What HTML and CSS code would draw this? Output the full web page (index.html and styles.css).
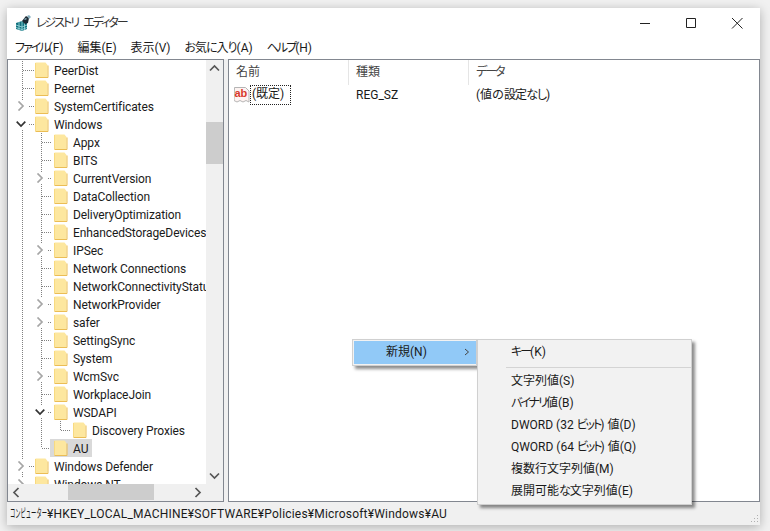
FILE: index.html
```html
<!DOCTYPE html>
<html lang="ja">
<head>
    <meta charset="UTF-8">
    <meta name="viewport" content="width=device-width, initial-scale=1.0">
    <title>レジストリ エディター</title>
    <link rel="stylesheet" href="styles.css">
</head>
<body>
    <svg class="defs" width="0" height="0">
        <defs>
            <symbol id="folder" viewBox="0 0 14 16">
                <path d="M.5 .5h10l2 2.500v12.500H.5z" fill="#fde79f"/>
                <path d="M13 3.500v12H.5" fill="none" stroke="#ebbd55"/>
                <path d="M.5 1v14" fill="none" stroke="#f8da80"/>
            </symbol>
            <symbol id="open" viewBox="0 0 10 10">
                <path d="M.7 2.700L5 7l4.300-4.300" fill="none" stroke="#333" stroke-width="1.700"/>
            </symbol>
            <symbol id="closed" viewBox="0 0 10 10">
                <path d="M2.500 .5L7 5 2.500 9.500" fill="none" stroke="#a6a6a6" stroke-width="1.700"/>
            </symbol>
        </defs>
    </svg>

    <div class="window">
        <div class="titlebar">
            <svg class="appicon" width="16" height="16" viewBox="0 0 16 16">
                <path d="M0 8l6-2 5 1.500V14l-5 2-6-2z" fill="#12707c"/>
                <path d="M0 10l6 2 5-2M0 12.500l6 2 5-2M3 7v8M6 6v10M8.500 7v8" stroke="#9fdde2" stroke-width=".8" fill="none"/>
                <path d="M6 6l4-5 3 2-1 5-3 1z" fill="#1d2a33"/>
                <path d="M11 1l2-1 2 2-2 2zM8 4l2-1 1 1-2 1z" fill="#86aebd"/>
            </svg>
            <span class="title kata">レジストリ エディター</span>
            <div class="winbtns">
                <svg width="46" height="30" viewBox="0 0 46 30"><path d="M18 15.500h10" stroke="#222"/></svg>
                <svg width="46" height="30" viewBox="0 0 46 30"><path d="M18.500 10.500h9v9h-9z" fill="none" stroke="#222"/></svg>
                <svg width="46" height="30" viewBox="0 0 46 30"><path d="M18 10l10.500 10.500M28.500 10L18 20.500" stroke="#222"/></svg>
            </div>
        </div>

        <div class="menubar">
            <span><span class="kata">ファイル</span>(F)</span>
            <span>編集(E)</span>
            <span>表示(V)</span>
            <span><span class="kana">お気に入り</span>(A)</span>
            <span><span class="kata">ヘルプ</span>(H)</span>
        </div>

        <div class="panes">
            <div class="treepane">
                <div class="treeview">
                    <div class="tree">
                        <svg class="guides" width="198" height="430" viewBox="0 0 198 430">
                            <path d="M14.500 0v39M14.500 69v330M14.500 411v6M15 9.500h11M15 27.500h11M21 45.500h5M21 63.500h5M21 405.500h5M21 423.500h5M33.500 72v39M33.500 123v60M33.500 195v42M33.500 267v42M33.500 321v24M33.500 357v30M34 81.500h10M34 99.500h10M34 135.500h10M34 153.500h10M34 171.500h10M34 207.500h10M34 225.500h10M34 279.500h10M34 297.500h10M34 333.500h10M34 387.500h10M40 117.500h4M40 189.500h4M40 243.500h4M40 261.500h4M40 315.500h4M40 351.500h4M52.500 360v9M53 369.500h10" stroke="#808080" stroke-dasharray="1 1" fill="none"/>
                        </svg>
                        <div class="row lv0"><svg class="tog"></svg><svg class="fld"><use href="#folder"/></svg><span>PeerDist</span></div>
                        <div class="row lv0"><svg class="tog"></svg><svg class="fld"><use href="#folder"/></svg><span>Peernet</span></div>
                        <div class="row lv0"><svg class="tog"><use href="#closed"/></svg><svg class="fld"><use href="#folder"/></svg><span>SystemCertificates</span></div>
                        <div class="row lv0"><svg class="tog"><use href="#open"/></svg><svg class="fld"><use href="#folder"/></svg><span>Windows</span></div>
                        <div class="row lv1"><svg class="tog"></svg><svg class="fld"><use href="#folder"/></svg><span>Appx</span></div>
                        <div class="row lv1"><svg class="tog"></svg><svg class="fld"><use href="#folder"/></svg><span>BITS</span></div>
                        <div class="row lv1"><svg class="tog"><use href="#closed"/></svg><svg class="fld"><use href="#folder"/></svg><span>CurrentVersion</span></div>
                        <div class="row lv1"><svg class="tog"></svg><svg class="fld"><use href="#folder"/></svg><span>DataCollection</span></div>
                        <div class="row lv1"><svg class="tog"></svg><svg class="fld"><use href="#folder"/></svg><span>DeliveryOptimization</span></div>
                        <div class="row lv1"><svg class="tog"></svg><svg class="fld"><use href="#folder"/></svg><span>EnhancedStorageDevices</span></div>
                        <div class="row lv1"><svg class="tog"><use href="#closed"/></svg><svg class="fld"><use href="#folder"/></svg><span>IPSec</span></div>
                        <div class="row lv1"><svg class="tog"></svg><svg class="fld"><use href="#folder"/></svg><span>Network Connections</span></div>
                        <div class="row lv1"><svg class="tog"></svg><svg class="fld"><use href="#folder"/></svg><span>NetworkConnectivityStatusIndicator</span></div>
                        <div class="row lv1"><svg class="tog"><use href="#closed"/></svg><svg class="fld"><use href="#folder"/></svg><span>NetworkProvider</span></div>
                        <div class="row lv1"><svg class="tog"><use href="#closed"/></svg><svg class="fld"><use href="#folder"/></svg><span>safer</span></div>
                        <div class="row lv1"><svg class="tog"></svg><svg class="fld"><use href="#folder"/></svg><span>SettingSync</span></div>
                        <div class="row lv1"><svg class="tog"></svg><svg class="fld"><use href="#folder"/></svg><span>System</span></div>
                        <div class="row lv1"><svg class="tog"><use href="#closed"/></svg><svg class="fld"><use href="#folder"/></svg><span>WcmSvc</span></div>
                        <div class="row lv1"><svg class="tog"></svg><svg class="fld"><use href="#folder"/></svg><span>WorkplaceJoin</span></div>
                        <div class="row lv1"><svg class="tog"><use href="#open"/></svg><svg class="fld"><use href="#folder"/></svg><span>WSDAPI</span></div>
                        <div class="row lv2"><svg class="tog"></svg><svg class="fld"><use href="#folder"/></svg><span>Discovery Proxies</span></div>
                        <div class="row lv1 selected"><svg class="tog"></svg><svg class="fld"><use href="#folder"/></svg><span>AU</span></div>
                        <div class="row lv0"><svg class="tog"><use href="#closed"/></svg><svg class="fld"><use href="#folder"/></svg><span>Windows Defender</span></div>
                        <div class="row lv0"><svg class="tog"><use href="#closed"/></svg><svg class="fld"><use href="#folder"/></svg><span>Windows NT</span></div>
                    </div>
                    <div class="vscroll">
                        <svg width="17" height="17" viewBox="0 0 17 17"><path d="M4 10.500l4.500-4.500 4.500 4.500" fill="none" stroke="#555" stroke-width="1.700"/></svg>
                        <div class="vtrack"><div class="vthumb"></div></div>
                        <svg width="17" height="17" viewBox="0 0 17 17"><path d="M4 6.500l4.500 4.500 4.500-4.500" fill="none" stroke="#555" stroke-width="1.700"/></svg>
                    </div>
                </div>
                <div class="hscroll">
                    <svg width="17" height="17" viewBox="0 0 17 17"><path d="M10.500 4l-4.500 4.500 4.500 4.500" fill="none" stroke="#555" stroke-width="1.700"/></svg>
                    <div class="htrack"><div class="hthumb"></div></div>
                    <svg width="17" height="17" viewBox="0 0 17 17"><path d="M6.500 4l4.500 4.500-4.500 4.500" fill="none" stroke="#555" stroke-width="1.700"/></svg>
                    <div class="corner"></div>
                </div>
            </div>

            <div class="listpane">
                <div class="listhead">
                    <div class="col col1">名前</div>
                    <div class="col col2">種類</div>
                    <div class="col col3 kata">データ</div>
                </div>
                <div class="listrow">
                    <div class="col1 namecell">
                        <svg width="16" height="16" viewBox="0 0 16 16">
                            <path d="M.5 .5h11l3.500 3.500v11l-3-1.500-3 1.500-3-1.500-3 1.500-3-1.500z" fill="#fdf3f1" stroke="#b5b5b5"/>
                            <text x=".5" y="10" class="abtext">ab</text>
                        </svg>
                        <span class="focused">(既定)</span>
                    </div>
                    <div class="col2 cell">REG_SZ</div>
                    <div class="col3 cell">(値の<span class="kana">設定なし</span>)</div>
                </div>
            </div>
        </div>

        <div class="statusbar">
            <span class="narrow">コンピューター</span>
            <span class="path">¥HKEY_LOCAL_MACHINE¥SOFTWARE¥Policies¥Microsoft¥Windows¥AU</span>
            <svg class="grip" width="12" height="12" viewBox="0 0 12 12">
                <path d="M9 2h1v1H9zM6 5h1v1H6zM9 5h1v1H9zM3 8h1v1H3zM6 8h1v1H6zM9 8h1v1H9z" fill="#b0b0b0"/>
            </svg>
        </div>

        <div class="ctxmenu">
            <div class="ctxitem">
                <span>新規(N)</span>
                <svg width="8" height="8" viewBox="0 0 8 8"><path d="M2 1l3.500 3L2 7" fill="none" stroke="#444"/></svg>
            </div>
        </div>
        <div class="submenu">
            <div class="subitem"><span><span class="kata">キー</span>(K)</span></div>
            <div class="subsep"></div>
            <div class="subitem">文字列値(S)</div>
            <div class="subitem"><span><span class="kata">バイナリ</span>値(B)</span></div>
            <div class="subitem"><span>DWORD (32 <span class="kata">ビット</span>) 値(D)</span></div>
            <div class="subitem"><span>QWORD (64 <span class="kata">ビット</span>) 値(Q)</span></div>
            <div class="subitem">複数行文字列値(M)</div>
            <div class="subitem"><span>展開可能<span class="kana">な</span>文字列値(E)</span></div>
        </div>
    </div>
</body>
</html>
```

FILE: styles.css
```css
*{
    box-sizing: border-box;
}
html, body{
    height: 100%;
}
body{
    margin: 0;
    padding: 8px 10px 6px 7px;
    background-color: #f1f1f1;
    font-family: Roboto, "Noto Sans CJK JP", sans-serif;
    font-size: 12px;
    line-height: 16px;
    color: #1a1a1a;
    overflow: hidden;
}
.defs{
    position: absolute;
}
/* 가나는 폭이 좁게 보이도록 */
.kana{
    font-feature-settings: "palt";
    letter-spacing: -1px;
}
.kata{
    font-feature-settings: "palt";
    letter-spacing: -2px;
}
.window{
    position: relative;
    height: 517px;
    display: flex;
    flex-direction: column;
    background: #fff;
    box-shadow: 0 2px 10px rgba(0, 0, 0, 0.28);
}
.titlebar{
    height: 30px;
    display: flex;
    align-items: center;
    padding-left: 9px;
    flex: none;
}
.appicon{
    margin-right: 4px;
}
.title{
    font-size: 12px;
    color: #333;
    word-spacing: 4px;
}
.winbtns{
    margin-left: auto;
    display: flex;
}
.menubar{
    height: 21px;
    display: flex;
    align-items: center;
    gap: 14px;
    padding: 0 0 2px 8px;
    flex: none;
}
.panes{
    flex: 1;
    display: flex;
    gap: 4px;
    background: #f0f0f0;
    min-height: 0;
}
/* 왼쪽 트리 */
.treepane{
    width: 217px;
    display: flex;
    flex-direction: column;
    border: 1px solid #828790;
    background: #fff;
    flex: none;
}
.treeview{
    flex: 1;
    display: flex;
    min-height: 0;
}
.tree{
    position: relative;
    flex: 1;
    overflow: hidden;
    padding-top: 1px;
    letter-spacing: -0.1px;
}
.guides{
    position: absolute;
    left: 0;
    top: 1px;
}
.row{
    position: relative;
    height: 18px;
    display: flex;
    align-items: center;
    white-space: nowrap;
}
.row span{
    padding-top: 2px;
}
.lv0{
    padding-left: 8px;
}
.lv1{
    padding-left: 27px;
}
.lv2{
    padding-left: 46px;
}
.tog{
    width: 10px;
    height: 10px;
    flex: none;
    margin-right: 9px;
}
.fld{
    width: 14px;
    height: 16px;
    flex: none;
    margin-right: 5px;
}
.selected{
    align-items: stretch;
}
.selected .tog{
    margin-right: 5px;
    align-self: center;
}
.selected .fld{
    width: 23px;
    height: 18px;
    padding: 1px 5px 1px 4px;
    margin-right: 0;
    background: #d9d9d9;
}
.selected span{
    background: #d9d9d9;
    padding-right: 4px;
}
.vscroll{
    width: 17px;
    display: flex;
    flex-direction: column;
    background: #f0f0f0;
    flex: none;
}
.vtrack{
    flex: 1;
    padding-top: 45px;
}
.vthumb{
    height: 42px;
    background: #cdcdcd;
}
.hscroll{
    height: 17px;
    display: flex;
    background: #f0f0f0;
    flex: none;
}
.htrack{
    flex: 1;
    padding-left: 43px;
}
.hthumb{
    width: 86px;
    height: 16px;
    background: #cdcdcd;
}
.corner{
    width: 17px;
}
/* 오른쪽 목록 */
.listpane{
    flex: 1;
    border: 1px solid #828790;
    background: #fff;
    position: relative;
}
.listhead{
    height: 25px;
    display: flex;
    align-items: center;
}
.col{
    height: 100%;
    display: flex;
    align-items: center;
    padding: 0 0 2px 7px;
    border-right: 1px solid #e5e5e5;
    color: #444;
}
.col1{
    width: 120px;
    flex: none;
}
.col2{
    width: 120px;
    flex: none;
}
.col3{
    flex: none;
}
.col.col3{
    border-right: none;
}
.listrow{
    height: 18px;
    margin-top: 1px;
    display: flex;
    align-items: center;
}
.namecell{
    display: flex;
    align-items: center;
    padding-left: 5px;
    gap: 1px;
}
.cell{
    padding-left: 7px;
}
.abtext{
    font-family: "Liberation Sans", sans-serif;
    font-size: 11px;
    font-weight: 700;
    fill: #d8392b;
}
.focused{
    outline: 1px dotted #222;
    padding: 0 6px 0 1px;
    height: 18px;
    line-height: 17px;
}
.statusbar{
    height: 23px;
    flex: none;
    display: flex;
    align-items: center;
    background: #f0f0f0;
    padding-left: 3px;
}
/* 상태표시줄의 가나는 반각처럼 좁다 */
.narrow{
    width: 37px;
    white-space: nowrap;
    transform: scaleX(0.44);
    transform-origin: left center;
    flex: none;
}
.path{
    letter-spacing: 0.2px;
}
.grip{
    align-self: flex-end;
    margin-left: auto;
}
/* 우클릭 메뉴 */
.ctxmenu{
    position: absolute;
    left: 345px;
    top: 331px;
    width: 125px;
    height: 27px;
    background: #f2f2f2;
    border: 1px solid #d0d0d0;
    padding: 1px 0 1px 1px;
    box-shadow: 3px 3px 3px rgba(0, 0, 0, 0.45);
}
.ctxitem{
    height: 100%;
    background: #91c9f7;
    display: flex;
    align-items: center;
    justify-content: space-between;
    padding: 0 5px 1px 32px;
}
.submenu{
    position: absolute;
    left: 470px;
    top: 331px;
    width: 215px;
    height: 166px;
    background: #f2f2f2;
    border: 1px solid #d0d0d0;
    padding-top: 1px;
    box-shadow: 3px 3px 3px rgba(0, 0, 0, 0.45);
}
.subitem{
    height: 22px;
    display: flex;
    align-items: center;
    padding-left: 33px;
    white-space: nowrap;
}
.subsep{
    height: 1px;
    margin: 4px 0 2px 28px;
    background: #d4d4d4;
}
```
